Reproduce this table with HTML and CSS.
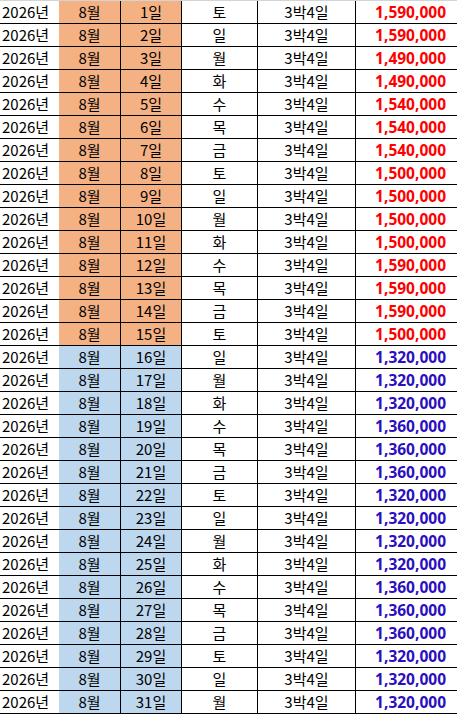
FILE: index.html
```html
<!DOCTYPE html>
<html lang="ko">
<head>
<meta charset="utf-8">
<link rel="stylesheet" href="styles.css">
</head>
<body>
<div class="sheet">
<div class="row peak"><div class="c y">2026년</div><div class="c m">8월</div><div class="c d">1일</div><div class="c w">토</div><div class="c n">3박4일</div><div class="c p red">1,590,000</div></div>
<div class="row peak"><div class="c y">2026년</div><div class="c m">8월</div><div class="c d">2일</div><div class="c w">일</div><div class="c n">3박4일</div><div class="c p red">1,590,000</div></div>
<div class="row peak"><div class="c y">2026년</div><div class="c m">8월</div><div class="c d">3일</div><div class="c w">월</div><div class="c n">3박4일</div><div class="c p red">1,490,000</div></div>
<div class="row peak"><div class="c y">2026년</div><div class="c m">8월</div><div class="c d">4일</div><div class="c w">화</div><div class="c n">3박4일</div><div class="c p red">1,490,000</div></div>
<div class="row peak"><div class="c y">2026년</div><div class="c m">8월</div><div class="c d">5일</div><div class="c w">수</div><div class="c n">3박4일</div><div class="c p red">1,540,000</div></div>
<div class="row peak"><div class="c y">2026년</div><div class="c m">8월</div><div class="c d">6일</div><div class="c w">목</div><div class="c n">3박4일</div><div class="c p red">1,540,000</div></div>
<div class="row peak"><div class="c y">2026년</div><div class="c m">8월</div><div class="c d">7일</div><div class="c w">금</div><div class="c n">3박4일</div><div class="c p red">1,540,000</div></div>
<div class="row peak"><div class="c y">2026년</div><div class="c m">8월</div><div class="c d">8일</div><div class="c w">토</div><div class="c n">3박4일</div><div class="c p red">1,500,000</div></div>
<div class="row peak"><div class="c y">2026년</div><div class="c m">8월</div><div class="c d">9일</div><div class="c w">일</div><div class="c n">3박4일</div><div class="c p red">1,500,000</div></div>
<div class="row peak"><div class="c y">2026년</div><div class="c m">8월</div><div class="c d">10일</div><div class="c w">월</div><div class="c n">3박4일</div><div class="c p red">1,500,000</div></div>
<div class="row peak"><div class="c y">2026년</div><div class="c m">8월</div><div class="c d">11일</div><div class="c w">화</div><div class="c n">3박4일</div><div class="c p red">1,500,000</div></div>
<div class="row peak"><div class="c y">2026년</div><div class="c m">8월</div><div class="c d">12일</div><div class="c w">수</div><div class="c n">3박4일</div><div class="c p red">1,590,000</div></div>
<div class="row peak"><div class="c y">2026년</div><div class="c m">8월</div><div class="c d">13일</div><div class="c w">목</div><div class="c n">3박4일</div><div class="c p red">1,590,000</div></div>
<div class="row peak"><div class="c y">2026년</div><div class="c m">8월</div><div class="c d">14일</div><div class="c w">금</div><div class="c n">3박4일</div><div class="c p red">1,590,000</div></div>
<div class="row peak"><div class="c y">2026년</div><div class="c m">8월</div><div class="c d">15일</div><div class="c w">토</div><div class="c n">3박4일</div><div class="c p red">1,500,000</div></div>
<div class="row off"><div class="c y">2026년</div><div class="c m">8월</div><div class="c d">16일</div><div class="c w">일</div><div class="c n">3박4일</div><div class="c p blue">1,320,000</div></div>
<div class="row off"><div class="c y">2026년</div><div class="c m">8월</div><div class="c d">17일</div><div class="c w">월</div><div class="c n">3박4일</div><div class="c p blue">1,320,000</div></div>
<div class="row off"><div class="c y">2026년</div><div class="c m">8월</div><div class="c d">18일</div><div class="c w">화</div><div class="c n">3박4일</div><div class="c p blue">1,320,000</div></div>
<div class="row off"><div class="c y">2026년</div><div class="c m">8월</div><div class="c d">19일</div><div class="c w">수</div><div class="c n">3박4일</div><div class="c p blue">1,360,000</div></div>
<div class="row off"><div class="c y">2026년</div><div class="c m">8월</div><div class="c d">20일</div><div class="c w">목</div><div class="c n">3박4일</div><div class="c p blue">1,360,000</div></div>
<div class="row off"><div class="c y">2026년</div><div class="c m">8월</div><div class="c d">21일</div><div class="c w">금</div><div class="c n">3박4일</div><div class="c p blue">1,360,000</div></div>
<div class="row off"><div class="c y">2026년</div><div class="c m">8월</div><div class="c d">22일</div><div class="c w">토</div><div class="c n">3박4일</div><div class="c p blue">1,320,000</div></div>
<div class="row off"><div class="c y">2026년</div><div class="c m">8월</div><div class="c d">23일</div><div class="c w">일</div><div class="c n">3박4일</div><div class="c p blue">1,320,000</div></div>
<div class="row off"><div class="c y">2026년</div><div class="c m">8월</div><div class="c d">24일</div><div class="c w">월</div><div class="c n">3박4일</div><div class="c p blue">1,320,000</div></div>
<div class="row off"><div class="c y">2026년</div><div class="c m">8월</div><div class="c d">25일</div><div class="c w">화</div><div class="c n">3박4일</div><div class="c p blue">1,320,000</div></div>
<div class="row off"><div class="c y">2026년</div><div class="c m">8월</div><div class="c d">26일</div><div class="c w">수</div><div class="c n">3박4일</div><div class="c p blue">1,360,000</div></div>
<div class="row off"><div class="c y">2026년</div><div class="c m">8월</div><div class="c d">27일</div><div class="c w">목</div><div class="c n">3박4일</div><div class="c p blue">1,360,000</div></div>
<div class="row off"><div class="c y">2026년</div><div class="c m">8월</div><div class="c d">28일</div><div class="c w">금</div><div class="c n">3박4일</div><div class="c p blue">1,360,000</div></div>
<div class="row off"><div class="c y">2026년</div><div class="c m">8월</div><div class="c d">29일</div><div class="c w">토</div><div class="c n">3박4일</div><div class="c p blue">1,320,000</div></div>
<div class="row off"><div class="c y">2026년</div><div class="c m">8월</div><div class="c d">30일</div><div class="c w">일</div><div class="c n">3박4일</div><div class="c p blue">1,320,000</div></div>
<div class="row off"><div class="c y">2026년</div><div class="c m">8월</div><div class="c d">31일</div><div class="c w">월</div><div class="c n">3박4일</div><div class="c p blue">1,320,000</div></div>
</div>
</body>
</html>
```
FILE: styles.css
```css
html, body {
  margin: 0;
  padding: 0;
  background: #ffffff;
}
.sheet {
  width: 457px;
  border-top: 1px solid #d4d4d4;
  font-family: "Noto Sans CJK KR", "Noto Sans", sans-serif;
  font-size: 15px;
  color: #000;
}
.row {
  display: grid;
  grid-template-columns: 59px 62px 61px 76px 98px 101px;
  height: 22px;
  border-bottom: 1px solid #000;
}
.c {
  box-sizing: border-box;
  height: 22px;
  line-height: 22px;
  white-space: nowrap;
  overflow: hidden;
  text-align: center;
}
.m, .d, .w, .n {
  border-right: 1px solid #000;
}
.y {
  text-align: left;
  padding-left: 2px;
}
.peak .m, .peak .d { background: #f4b183; }
.off .m, .off .d { background: #bdd7ee; }
.p {
  text-align: right;
  padding-right: 11px;
  font-family: "Noto Sans", "Noto Sans CJK KR", sans-serif;
  font-size: 15.5px;
  font-weight: bold;
}
.red { color: #ff0000; }
.blue { color: #2a0fc0; }
```
